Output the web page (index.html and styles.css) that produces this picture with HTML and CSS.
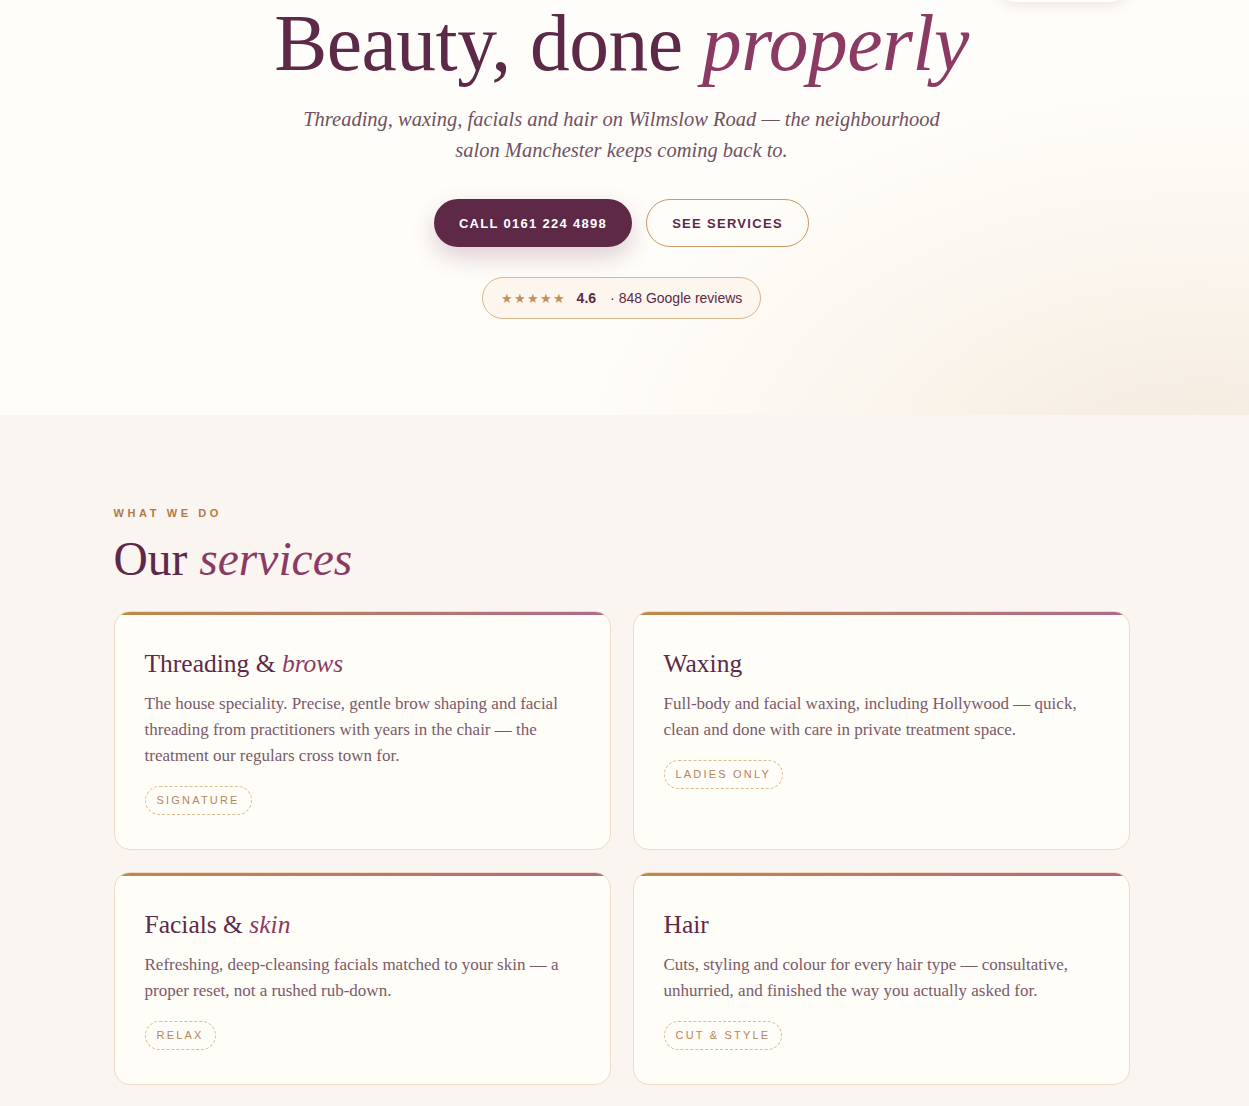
FILE: index.html
```html
<!DOCTYPE html>
<html lang="en">
<head>
<meta charset="utf-8">
<title>Beauty, done properly</title>
<link rel="stylesheet" href="styles.css">
</head>
<body>
<header class="hero">
  <div class="nav-ghost"></div>
  <h1 class="hero-title">Beauty, done <em>properly</em></h1>
  <p class="hero-sub">Threading, waxing, facials and hair on Wilmslow Road — the neighbourhood salon Manchester keeps coming back to.</p>
  <div class="hero-actions">
    <a class="btn btn-primary" href="#">CALL 0161 224 4898</a>
    <a class="btn btn-outline" href="#services">SEE SERVICES</a>
  </div>
  <div class="rating">
    <span class="stars">★★★★★</span>
    <strong class="score">4.6</strong>
    <span class="count">· 848 Google reviews</span>
  </div>
</header>

<section class="services" id="services">
  <div class="container">
    <p class="eyebrow">WHAT WE DO</p>
    <h2 class="section-title">Our <em>services</em></h2>
    <div class="grid">
      <article class="card">
        <h3 class="card-title">Threading &amp; <em>brows</em></h3>
        <p class="card-text">The house speciality. Precise, gentle brow shaping and facial threading from practitioners with years in the chair — the treatment our regulars cross town for.</p>
        <span class="tag">SIGNATURE</span>
      </article>
      <article class="card">
        <h3 class="card-title">Waxing</h3>
        <p class="card-text">Full-body and facial waxing, including Hollywood — quick, clean and done with care in private treatment space.</p>
        <span class="tag">LADIES ONLY</span>
      </article>
      <article class="card">
        <h3 class="card-title">Facials &amp; <em>skin</em></h3>
        <p class="card-text">Refreshing, deep-cleansing facials matched to your skin — a proper reset, not a rushed rub-down.</p>
        <span class="tag">RELAX</span>
      </article>
      <article class="card">
        <h3 class="card-title">Hair</h3>
        <p class="card-text">Cuts, styling and colour for every hair type — consultative, unhurried, and finished the way you actually asked for.</p>
        <span class="tag">CUT &amp; STYLE</span>
      </article>
    </div>
  </div>
</section>
</body>
</html>
```

FILE: styles.css
```css
* { box-sizing: border-box; }
html, body { margin: 0; padding: 0; }
body {
  background: #faf5f0;
  font-family: Georgia, "Liberation Serif", "DejaVu Serif", serif;
  color: #5c2a48;
}
em { font-style: italic; color: #8b3a64; }

.hero {
  position: relative;
  overflow: hidden;
  height: 415px;
  padding: 0 6px 0 0;
  text-align: center;
  background:
    radial-gradient(ellipse 640px 400px at 1200px 480px, #f3e9dc 0%, rgba(246,238,227,0.65) 45%, rgba(255,253,249,0) 100%),
    #fffdf9;
}
.nav-ghost {
  position: absolute;
  top: -40px;
  left: 995px;
  width: 135px;
  height: 42px;
  border-radius: 30px;
  background: #fffdf9;
  box-shadow: 0 4px 14px rgba(92,42,72,0.10);
}
.hero-title {
  margin: 0;
  font-family: Georgia, "Liberation Serif", serif;
  font-weight: 400;
  font-size: 79.5px;
  line-height: 86px;
  letter-spacing: -0.5px;
  color: #5c2a48;
}
.hero-title em { color: #8b3a64; }
.hero-sub {
  margin: 18px auto 0;
  max-width: 660px;
  font-style: italic;
  font-size: 20.5px;
  line-height: 31px;
  color: #6e5262;
}
.hero-actions {
  margin-top: 33px;
  display: flex;
  justify-content: center;
  gap: 14px;
}
.btn {
  display: inline-flex;
  align-items: center;
  justify-content: center;
  height: 48px;
  border-radius: 999px;
  font-family: "Liberation Sans", Arial, sans-serif;
  font-weight: 700;
  font-size: 13px;
  letter-spacing: 1.3px;
  text-decoration: none;
}
.btn-primary {
  width: 198px;
  background: #5e2847;
  color: #fff;
  box-shadow: 0 10px 24px rgba(94,40,71,0.22);
}
.btn-outline {
  width: 163px;
  border: 1px solid #c99a62;
  color: #5c2a48;
  background: transparent;
}
.rating {
  margin: 30px auto 0;
  display: inline-flex;
  align-items: center;
  height: 42px;
  padding: 0 18px;
  border: 1px solid #dcb78a;
  border-radius: 999px;
  background: #fcf6ee;
  font-family: "Liberation Sans", Arial, sans-serif;
  font-size: 14px;
  color: #5c2a48;
}
.stars { color: #c0905a; font-size: 13px; letter-spacing: 1px; }
.score { margin-left: 11px; font-weight: 700; }
.count { margin-left: 14px; }

.services {
  padding: 92px 0 40px;
}
.container {
  width: 1016px;
  margin: 0 auto;
  position: relative;
  left: -3px;
}
.eyebrow {
  margin: 0;
  font-family: "Liberation Sans", Arial, sans-serif;
  font-weight: 700;
  font-size: 11px;
  letter-spacing: 3.6px;
  color: #b07a4a;
}
.section-title {
  margin: 13px 0 0;
  font-weight: 400;
  font-size: 47.5px;
  line-height: 54px;
  color: #5c2a48;
}
.grid {
  margin-top: 25px;
  display: grid;
  grid-template-columns: 1fr 1fr;
  gap: 22px;
}
.card {
  position: relative;
  overflow: hidden;
  background: #fffdf8;
  border: 1px solid #eddcc6;
  border-radius: 16px;
  padding: 37px 30px 34px;
}
.card::before {
  content: "";
  position: absolute;
  top: 0; left: 0; right: 0;
  height: 3px;
  background: linear-gradient(90deg, #c08a48, #b06a8a);
}
.card-title {
  margin: 0;
  font-weight: 400;
  font-size: 25.5px;
  line-height: 30px;
  color: #5c2a48;
}
.card-text {
  margin: 12px 0 0;
  font-size: 17px;
  line-height: 26px;
  color: #7a5a6a;
}
.tag {
  display: inline-block;
  margin-top: 17px;
  height: 29px;
  line-height: 27px;
  padding: 0 11px;
  border: 1px dashed #dcbb8c;
  border-radius: 999px;
  font-family: "Liberation Sans", Arial, sans-serif;
  font-size: 11px;
  letter-spacing: 2.2px;
  color: #b8845a;
}
```
